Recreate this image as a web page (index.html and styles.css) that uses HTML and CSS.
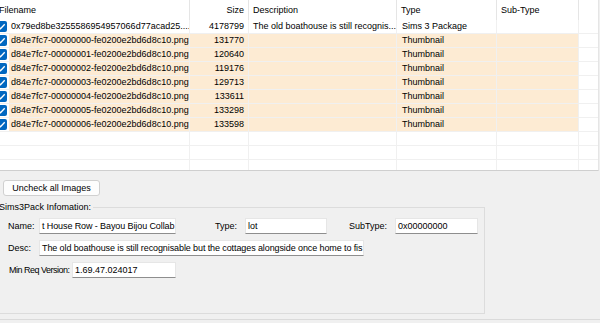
FILE: index.html
```html
<!DOCTYPE html>
<html lang="en">
<head>
    <meta charset="UTF-8">
    <title>Sims3Pack Files</title>
    <link rel="stylesheet" href="styles.css">
</head>
<body>
    <div class="list">
        <div class="grid head">
            <div class="col c-name">Filename</div>
            <div class="col c-size">Size</div>
            <div class="col c-desc">Description</div>
            <div class="col c-type">Type</div>
            <div class="col c-sub">Sub-Type</div>
            <div class="col c-fill"></div>
        </div>
        <div class="grid row">
            <div class="col c-name"><span class="chk"><svg viewBox="0 0 11 11"><path d="M2.4 5.6 L4.5 7.8 L8.7 3.2"/></svg></span><span class="nm">0x79ed8be3255586954957066d77acad25....</span></div>
            <div class="col c-size">4178799</div>
            <div class="col c-desc">The old boathouse is still recognis...</div>
            <div class="col c-type">Sims 3 Package</div>
            <div class="col c-sub"></div>
            <div class="col c-fill"></div>
        </div>
        <div class="grid row hl">
            <div class="col c-name"><span class="chk"><svg viewBox="0 0 11 11"><path d="M2.4 5.6 L4.5 7.8 L8.7 3.2"/></svg></span><span class="nm">d84e7fc7-00000000-fe0200e2bd6d8c10.png</span></div>
            <div class="col c-size">131770</div>
            <div class="col c-desc"></div>
            <div class="col c-type">Thumbnail</div>
            <div class="col c-sub"></div>
            <div class="col c-fill"></div>
        </div>
        <div class="grid row hl">
            <div class="col c-name"><span class="chk"><svg viewBox="0 0 11 11"><path d="M2.4 5.6 L4.5 7.8 L8.7 3.2"/></svg></span><span class="nm">d84e7fc7-00000001-fe0200e2bd6d8c10.png</span></div>
            <div class="col c-size">120640</div>
            <div class="col c-desc"></div>
            <div class="col c-type">Thumbnail</div>
            <div class="col c-sub"></div>
            <div class="col c-fill"></div>
        </div>
        <div class="grid row hl">
            <div class="col c-name"><span class="chk"><svg viewBox="0 0 11 11"><path d="M2.4 5.6 L4.5 7.8 L8.7 3.2"/></svg></span><span class="nm">d84e7fc7-00000002-fe0200e2bd6d8c10.png</span></div>
            <div class="col c-size">119176</div>
            <div class="col c-desc"></div>
            <div class="col c-type">Thumbnail</div>
            <div class="col c-sub"></div>
            <div class="col c-fill"></div>
        </div>
        <div class="grid row hl">
            <div class="col c-name"><span class="chk"><svg viewBox="0 0 11 11"><path d="M2.4 5.6 L4.5 7.8 L8.7 3.2"/></svg></span><span class="nm">d84e7fc7-00000003-fe0200e2bd6d8c10.png</span></div>
            <div class="col c-size">129713</div>
            <div class="col c-desc"></div>
            <div class="col c-type">Thumbnail</div>
            <div class="col c-sub"></div>
            <div class="col c-fill"></div>
        </div>
        <div class="grid row hl">
            <div class="col c-name"><span class="chk"><svg viewBox="0 0 11 11"><path d="M2.4 5.6 L4.5 7.8 L8.7 3.2"/></svg></span><span class="nm">d84e7fc7-00000004-fe0200e2bd6d8c10.png</span></div>
            <div class="col c-size">133611</div>
            <div class="col c-desc"></div>
            <div class="col c-type">Thumbnail</div>
            <div class="col c-sub"></div>
            <div class="col c-fill"></div>
        </div>
        <div class="grid row hl">
            <div class="col c-name"><span class="chk"><svg viewBox="0 0 11 11"><path d="M2.4 5.6 L4.5 7.8 L8.7 3.2"/></svg></span><span class="nm">d84e7fc7-00000005-fe0200e2bd6d8c10.png</span></div>
            <div class="col c-size">133298</div>
            <div class="col c-desc"></div>
            <div class="col c-type">Thumbnail</div>
            <div class="col c-sub"></div>
            <div class="col c-fill"></div>
        </div>
        <div class="grid row hl">
            <div class="col c-name"><span class="chk"><svg viewBox="0 0 11 11"><path d="M2.4 5.6 L4.5 7.8 L8.7 3.2"/></svg></span><span class="nm">d84e7fc7-00000006-fe0200e2bd6d8c10.png</span></div>
            <div class="col c-size">133598</div>
            <div class="col c-desc"></div>
            <div class="col c-type">Thumbnail</div>
            <div class="col c-sub"></div>
            <div class="col c-fill"></div>
        </div>
        <div class="grid row"><div class="col"></div><div class="col"></div><div class="col"></div><div class="col"></div><div class="col"></div><div class="col c-fill"></div></div>
        <div class="grid row"><div class="col"></div><div class="col"></div><div class="col"></div><div class="col"></div><div class="col"></div><div class="col c-fill"></div></div>
        <div class="grid row"><div class="col"></div><div class="col"></div><div class="col"></div><div class="col"></div><div class="col"></div><div class="col c-fill"></div></div>
    </div>

    <div class="toolbar">
        <button class="btn">Uncheck all Images</button>
    </div>

    <fieldset class="group">
        <legend>Sims3Pack Infomation:</legend>
        <div class="group-body">
            <div class="frow">
                <span class="lbl w-name">Name:</span>
                <div class="box w-namebox">t House Row - Bayou Bijou Collab</div>
                <span class="lbl w-type">Type:</span>
                <div class="box w-typebox">lot</div>
                <span class="lbl w-sub">SubType:</span>
                <div class="box w-subbox">0x00000000</div>
            </div>
            <div class="frow">
                <span class="lbl w-name">Desc:</span>
                <div class="box w-descbox">The old boathouse is still recognisable but the cottages alongside once home to fis</div>
            </div>
            <div class="frow">
                <span class="lbl w-ver">Min Req Version:</span>
                <div class="box w-verbox">1.69.47.024017</div>
            </div>
        </div>
    </fieldset>

    <div class="statusbar"></div>
</body>
</html>
```

FILE: styles.css
```css
body {
    margin: 0;
    background-color: #F0F0F0;
    font-family: 'Liberation Sans', Arial, sans-serif;
    font-size: 9px;
    color: #000;
    overflow: hidden;
}
.list {
    width: 599px;
    height: 171px;
    overflow: hidden;
    background-color: #FFF;
    border-bottom: 1px solid #CFCFCF;
    border-right: 1px solid #E5E5E5;
    box-sizing: border-box;
}
.grid {
    display: grid;
    grid-template-columns: 195px 59px 148px 100px 82px 1fr;
    margin-left: -5px;
    white-space: nowrap;
}
.col {
    overflow: hidden;
    box-sizing: border-box;
    border-right: 1px solid #F0F0F0;
}
.head {
    height: 20px;
}
.head .col {
    border-right-color: #E5E5E5;
    line-height: 20px;
    padding-left: 4px;
}
.head .c-size {
    text-align: right;
    padding-right: 4px;
}
.head .c-fill {
    border-right: none;
}
.row {
    height: 14px;
    border-bottom: 1px solid #F0F0F0;
    box-sizing: border-box;
    line-height: 13px;
}
.row .c-name {
    display: flex;
    align-items: center;
    padding: 0;
}
.row .c-size {
    text-align: right;
    padding-right: 4px;
}
.row .c-desc {
    padding-left: 4px;
}
.row .c-type,
.row .c-sub {
    padding-left: 5px;
}
.c-fill {
    border-right: none;
}
.chk {
    flex: none;
    width: 11px;
    height: 11px;
    margin: 0 2px 0 1px;
    background-color: #0067C0;
    border-radius: 2px;
    display: flex;
}
.chk svg {
    width: 11px;
    height: 11px;
    fill: none;
    stroke: #FFF;
    stroke-width: 1.3;
}
.nm {
    flex: 1;
    height: 13px;
    padding-left: 2px;
    overflow: hidden;
}
.hl .nm,
.hl .c-size,
.hl .c-desc,
.hl .c-type,
.hl .c-sub {
    background-color: #FDEBD3;
}
.toolbar {
    padding: 9px 0 0 3px;
}
.btn {
    display: block;
    width: 97px;
    height: 16px;
    padding: 0;
    font-family: inherit;
    font-size: 9px;
    color: #000;
    background-color: #FDFDFD;
    border: 1px solid #D0D0D0;
    border-radius: 3px;
}
.group {
    width: 491px;
    margin: 5px 0 0 -6px;
    padding: 0;
    border: 1px solid #DCDCDC;
    box-sizing: border-box;
}
.group legend {
    margin-left: 2px;
    padding: 0 2px;
    line-height: 12px;
}
.group-body {
    padding: 5px 0 35px 13px;
    display: flex;
    flex-direction: column;
    gap: 6px;
}
.frow {
    display: flex;
    align-items: center;
    height: 16px;
}
.lbl {
    flex: none;
    white-space: nowrap;
}
.w-name { width: 31px; }
.w-type { width: 30px; margin-left: 39px; }
.w-sub { width: 46px; margin-left: 22px; }
.w-ver { width: 63px; margin-left: 1px; letter-spacing: -0.5px; }
.box {
    flex: none;
    height: 16px;
    line-height: 14px;
    padding-left: 2px;
    background-color: #FFF;
    border: 1px solid #E6E6E6;
    border-bottom-color: #8E8E8E;
    box-sizing: border-box;
    white-space: nowrap;
    overflow: hidden;
}
.w-namebox { width: 137px; letter-spacing: -0.1px; }
.w-typebox { width: 82px; }
.w-subbox { width: 83px; }
.w-descbox { width: 325px; letter-spacing: -0.1px; }
.w-verbox { width: 104px; }
.statusbar {
    margin-top: 5px;
    border-top: 1px solid #DADADA;
}
```
